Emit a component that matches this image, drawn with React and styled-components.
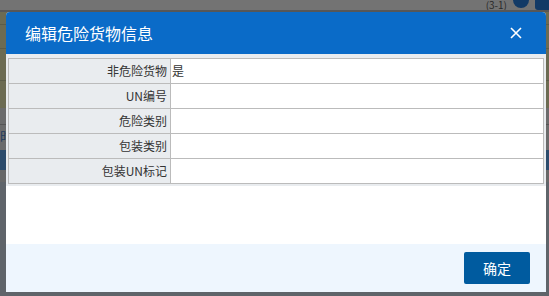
import React from "react";
import styled, { createGlobalStyle } from "styled-components";

const Global = createGlobalStyle`
  html, body { margin: 0; padding: 0; }
  body {
    width: 549px; height: 296px; overflow: hidden;
    background: #5f646a;
    font-family: "Noto Sans CJK SC", "Noto Sans", sans-serif;
  }
`;

const Page = styled.div`
  position: relative;
  width: 549px;
  height: 296px;
  overflow: hidden;
  display: flex;
  flex-direction: column;
`;

const Band = styled.div`
  height: ${(p) => p.h}px;
  background: ${(p) => p.bg};
  flex: none;
  position: relative;
  border-bottom: ${(p) => (p.line ? `1px solid ${p.line}` : "none")};
  box-sizing: border-box;
`;

const TopBand = styled(Band)`
  display: flex;
  justify-content: flex-end;
  align-items: flex-start;
  gap: 6px;
`;

const Pager = styled.span`
  font-size: 10px;
  line-height: 9px;
  color: #2a2a2a;
`;

const Dot = styled.span`
  width: 16px;
  height: 16px;
  border-radius: 50%;
  background: #123a66;
  margin-top: -8px;
`;

const Square = styled.span`
  width: 14px;
  height: 10px;
  border-radius: 0 0 0 3px;
  background: #123a66;
`;

const Frag = styled.span`
  position: absolute;
  left: 0;
  top: 4px;
  font-size: 13px;
  line-height: 14px;
  color: #1d3a5e;
`;

const Modal = styled.div`
  position: absolute;
  left: 6px;
  top: 12px;
  width: 540px;
  height: 280px;
  background: #fff;
  border-radius: 4px 4px 0 0;
  display: flex;
  flex-direction: column;
  overflow: hidden;
`;

const Header = styled.div`
  height: 42px;
  flex: none;
  background: #0a6bc8;
  display: flex;
  align-items: center;
  justify-content: space-between;
  padding: 0 24px 0 19px;
`;

const Title = styled.h3`
  margin: 0;
  font-size: 16px;
  font-weight: 400;
  color: #fff;
  line-height: 20px;
`;

const Close = styled.button`
  border: 0;
  background: transparent;
  padding: 0;
  width: 12px;
  height: 12px;
  display: flex;
  cursor: pointer;
`;

const Body = styled.div`
  background: #e9ecef;
  padding: 4px 2px 2px 2px;
  flex: none;
`;

const Table = styled.table`
  width: 100%;
  border-collapse: collapse;
  background: #fff;
  font-size: 12px;
  color: #333;
`;

const Row = styled.tr`
  height: 25px;
`;

const Label = styled.td`
  width: 158px;
  border: 1px solid #bbbbbb;
  background: #e9ecef;
  text-align: right;
  padding: 0 3px 0 0;
  line-height: 24px;
`;

const Value = styled.td`
  border: 1px solid #bbbbbb;
  padding: 0 0 0 1px;
  line-height: 24px;
  background: #fff;
`;

const Spacer = styled.div`
  flex: 1;
  background: #fff;
`;

const Footer = styled.div`
  height: 48px;
  flex: none;
  background: #eef6fe;
  display: flex;
  justify-content: flex-end;
  align-items: center;
  padding: 0 16px;
`;

const Button = styled.button`
  width: 66px;
  height: 32px;
  border: 0;
  border-radius: 2px;
  background: #005b9f;
  color: #fff;
  font-family: inherit;
  font-size: 14px;
  cursor: pointer;
`;

const rows = [
  ["非危险货物", "是"],
  ["UN编号", ""],
  ["危险类别", ""],
  ["包装类别", ""],
  ["包装UN标记", ""],
];

export default function App() {
  return (
    <>
      <Global />
      <Page>
        <TopBand h={10} bg="#737373">
          <Pager>(3-1)</Pager>
          <Dot />
          <Square />
        </TopBand>
        <Band h={2} bg="#575757" />
        <Band h={13} bg="#6c6b52" line="#5c5c48" />
        <Band h={24} bg="#6c6b52" line="#5c5c48" />
        <Band h={32} bg="#6c6b52" line="#5c5c48" />
        <Band h={27} bg="#6c6b52" />
        <Band h={17} bg="#6b6b6b" line="#555" />
        <Band h={25} bg="#6b6b6b">
          <Frag>时</Frag>
        </Band>
        <Band h={20} bg="#2b4b6c" />
        <Band h={12} bg="#676767" />
        <Band h={114} bg="#5f646a" />
        <Modal>
          <Header>
            <Title>编辑危险货物信息</Title>
            <Close aria-label="close">
              <svg width="12" height="12" viewBox="0 0 12 12">
                <path d="M1 1L11 11M11 1L1 11" stroke="#fff" strokeWidth="1.6" />
              </svg>
            </Close>
          </Header>
          <Body>
            <Table>
              <tbody>
                {rows.map(([k, v]) => (
                  <Row key={k}>
                    <Label>{k}</Label>
                    <Value>{v}</Value>
                  </Row>
                ))}
              </tbody>
            </Table>
          </Body>
          <Spacer />
          <Footer>
            <Button>确定</Button>
          </Footer>
        </Modal>
      </Page>
    </>
  );
}
